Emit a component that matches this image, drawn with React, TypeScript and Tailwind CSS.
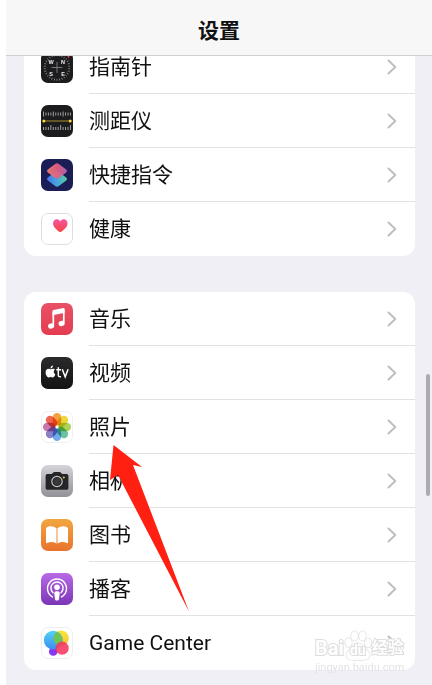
import type { ReactNode } from "react";

const COMPASS_TICKS = Array.from({ length: 30 }, (_, i) => i * 12);
const RULER_TICKS = Array.from({ length: 12 }, (_, i) => 2.5 + i * 2.45);
const PETALS = ["#f5a03a", "#ecd83a", "#aed258", "#6cc3a0", "#6fabe8", "#8a80c8", "#c777ac", "#ee6550"];

function Tile({ children, className }: { children?: ReactNode; className: string }) {
  return (
    <span className={`block size-8 shrink-0 overflow-hidden rounded-[7px] ${className}`}>
      <svg viewBox="0 0 32 32" className="size-full" aria-hidden="true">
        {children}
      </svg>
    </span>
  );
}

function CompassIcon() {
  return (
    <Tile className="bg-[#1c1c1e]">
      {COMPASS_TICKS.map((a) => (
        <path key={a} d="M16 3.2v2" stroke="#8f8f92" strokeWidth=".8" transform={`rotate(${a} 16 16.5)`} />
      ))}
      <path d="M16 11v11M10.500 16.500h11" stroke="#77777a" strokeWidth="1" />
      <path d="M25.500 3l3.500 1-1.500 3.500z" fill="#ff3b4a" />
      <g fill="#f0f0f0" fontSize="5.500" fontWeight="700" fontFamily="Liberation Sans, sans-serif" textAnchor="middle">
        <text x="10" y="12.500">W</text>
        <text x="22" y="12.500">N</text>
        <text x="10" y="24.500">S</text>
        <text x="22" y="24.500">E</text>
      </g>
    </Tile>
  );
}

function MeasureIcon() {
  return (
    <Tile className="bg-[#1c1c1e]">
      {RULER_TICKS.map((x, i) => (
        <g key={x} stroke="#b0b0b0" strokeWidth=".9">
          <path d={i % 4 === 0 ? `M${x} 6.500v5` : `M${x} 7.500v3`} />
          <path d={i % 4 === 3 ? `M${x} 25v-5` : `M${x} 25v-3`} />
        </g>
      ))}
      <path d="M3 16h26" stroke="#a98f2e" strokeWidth="1.200" />
      <circle cx="2.800" cy="16" r="1.500" fill="#ffd83a" />
      <circle cx="29.200" cy="16" r="1.500" fill="#ffd83a" />
    </Tile>
  );
}

function ShortcutsIcon() {
  return (
    <Tile className="bg-[#1b1d57]">
      <defs>
        <linearGradient id="sc-top" x1="0" y1="1" x2="1" y2="0">
          <stop offset="0" stopColor="#f0856f" />
          <stop offset=".5" stopColor="#e8607f" />
          <stop offset="1" stopColor="#b565b8" />
        </linearGradient>
        <linearGradient id="sc-low" x1="0" y1="1" x2="1" y2="0">
          <stop offset="0" stopColor="#4a6fe8" />
          <stop offset=".5" stopColor="#45a5e2" />
          <stop offset="1" stopColor="#5fcf8f" />
        </linearGradient>
      </defs>
      <rect x="8.500" y="12.500" width="15" height="15" rx="2.500" fill="url(#sc-low)" transform="translate(16 20) scale(1.040 .8) rotate(45) translate(-16 -20)" />
      <rect x="8.500" y="4.500" width="15" height="15" rx="2.500" fill="url(#sc-top)" fillOpacity=".93" transform="translate(16 12) scale(1.040 .8) rotate(45) translate(-16 -12)" />
    </Tile>
  );
}

function HealthIcon() {
  return (
    <Tile className="border border-[#dededf] bg-white">
      <defs>
        <linearGradient id="heart" x1="0" y1="0" x2="0" y2="1">
          <stop offset="0" stopColor="#f556a0" />
          <stop offset="1" stopColor="#f4453f" />
        </linearGradient>
      </defs>
      <path d="M19.500 19.500c-4-2.800-7.700-5.700-7.700-9.500 0-2.500 1.700-4.300 4-4.300 1.600 0 3 .8 3.700 2.200.7-1.400 2.100-2.200 3.700-2.200 2.300 0 4 1.800 4 4.300 0 3.800-3.700 6.700-7.700 9.500z" fill="url(#heart)" />
    </Tile>
  );
}

function MusicIcon() {
  return (
    <Tile className="bg-linear-to-b from-[#e95166] to-[#e43b50]">
      <path d="M12.300 9.300v13M22.800 6.900v12.800" stroke="#fff" strokeWidth="1.700" fill="none" />
      <path d="M11.500 8.200c0-.7.400-1.100 1-1.200l10-2c.7-.1 1.100.2 1.100.9v3.800l-12.100 2.500z" fill="#fff" />
      <ellipse cx="10.100" cy="23" rx="3.100" ry="2.600" fill="#fff" transform="rotate(-15 10.100 23)" />
      <ellipse cx="20.600" cy="20.500" rx="3.100" ry="2.600" fill="#fff" transform="rotate(-15 20.600 20.500)" />
    </Tile>
  );
}

function TvIcon() {
  return (
    <Tile className="bg-linear-to-b from-[#2b2b2d] to-[#131314]">
      <path d="M9.700 12.200c.9-.1 2.200-.9 2.900-.4.500.1 1 .4 1.300.8-1.700 1.100-1.500 3.700.4 4.600-.5 1.500-1.500 3.300-2.600 3.300-.8 0-1.100-.5-2-.5s-1.200.5-2 .5c-1.500 0-3.100-2.900-3.100-5.200 0-2.200 1.400-3.500 2.900-3.500.9 0 1.600.5 2.200.4zM9.500 11.500c-.1-1.500 1-2.800 2.400-3 .2 1.600-1 2.900-2.400 3z" fill="#fff" />
      <path d="M17.300 10.300v7.500c0 1.700.8 2.200 2.700 1.900M15.200 12.700h4.800M21.300 12.300l2.900 7.500 2.900-7.500" fill="none" stroke="#fff" strokeWidth="1.500" />
    </Tile>
  );
}

function PhotosIcon() {
  return (
    <Tile className="border border-[#f0f0f1] bg-white">
      {PETALS.map((color, i) => (
        <rect key={color} x="11.500" y="1" width="9" height="13.500" rx="4.500" fill={color} className="mix-blend-multiply" transform={`rotate(${i * 45} 16 16)`} />
      ))}
      <circle cx="16" cy="16" r="1.200" fill="#fff" fillOpacity=".8" />
    </Tile>
  );
}

function CameraIcon() {
  return (
    <Tile className="bg-linear-to-b from-[#d5d4d9] to-[#929197]">
      <path d="M6.500 9h4.300l1.500-1.500c.3-.4.700-.6 1.200-.6h5c.5 0 .9.200 1.200.6l1.500 1.500h4.300c1.100 0 1.900.8 1.900 1.900v12c0 1.100-.8 1.900-1.900 1.900h-19c-1.100 0-1.900-.8-1.900-1.900v-12c0-1.100.8-1.900 1.900-1.900z" fill="#252527" />
      <circle cx="16" cy="16.500" r="5.200" fill="none" stroke="#c4c4c8" strokeWidth="1.200" />
      <circle cx="16" cy="16.500" r="3.400" fill="#39393c" />
      <circle cx="22.800" cy="12.500" r="1" fill="#f7c52e" />
    </Tile>
  );
}

function BooksIcon() {
  return (
    <Tile className="bg-linear-to-b from-[#f1a63e] to-[#e8722f]">
      <path d="M15.500 9.300C13.800 7.800 11.500 7 9.300 7.200 7.500 7.300 5.900 8 5.400 8.700c-.3.400-.4.800-.4 1.300v13.600c0 .6.500.8 1 .5 3-1.600 6.500-1.500 9.500.3zM16.500 9.300c1.700-1.500 4-2.300 6.200-2.100 1.800.1 3.400.8 3.900 1.500.3.400.4.800.4 1.300v13.600c0 .6-.5.8-1 .5-3-1.600-6.500-1.500-9.500.3z" fill="#fff" />
    </Tile>
  );
}

function PodcastsIcon() {
  return (
    <Tile className="bg-linear-to-b from-[#b96ae6] to-[#7a35b5]">
      <g fill="none" stroke="#fff" strokeLinecap="round" strokeWidth="1.400">
        <path d="M11.500 23.900a9.500 9.500 0 1 1 9 0" />
        <path d="M12 19.700a6.100 6.100 0 1 1 8 0" />
      </g>
      <circle cx="16" cy="14.300" r="2.800" fill="#fff" />
      <path d="M13.300 20.300c0-1.600 1.200-2.100 2.700-2.100s2.700.5 2.700 2.100l-.7 5.600c-.2 1-.9 1.500-2 1.500s-1.800-.5-2-1.500z" fill="#fff" />
    </Tile>
  );
}

function GameCenterIcon() {
  return (
    <Tile className="border border-[#eeeeef] bg-white">
      <defs>
        <linearGradient id="gc-blue" x1="0" y1="0" x2="0" y2="1">
          <stop offset="0" stopColor="#53d3f7" />
          <stop offset="1" stopColor="#3b8df0" />
        </linearGradient>
        <linearGradient id="gc-yellow" x1="0" y1="0" x2="0" y2="1">
          <stop offset="0" stopColor="#fbe638" />
          <stop offset="1" stopColor="#f5c13b" />
        </linearGradient>
        <clipPath id="gc-clip">
          <circle cx="12" cy="13" r="10" />
        </clipPath>
      </defs>
      <circle cx="12" cy="25" r="4.600" fill="#8a37f0" />
      <circle cx="20.300" cy="11" r="8.300" fill="url(#gc-yellow)" />
      <circle cx="12" cy="13" r="10" fill="url(#gc-blue)" />
      <circle cx="20.300" cy="11" r="8.300" fill="#6cc35a" clipPath="url(#gc-clip)" />
      <circle cx="21.500" cy="21.500" r="7" fill="#f5375f" fillOpacity=".88" />
    </Tile>
  );
}

type Item = { label: string; icon: ReactNode };

const toolItems: Item[] = [
  { label: "指南针", icon: <CompassIcon /> },
  { label: "测距仪", icon: <MeasureIcon /> },
  { label: "快捷指令", icon: <ShortcutsIcon /> },
  { label: "健康", icon: <HealthIcon /> },
];

const mediaItems: Item[] = [
  { label: "音乐", icon: <MusicIcon /> },
  { label: "视频", icon: <TvIcon /> },
  { label: "照片", icon: <PhotosIcon /> },
  { label: "相机", icon: <CameraIcon /> },
  { label: "图书", icon: <BooksIcon /> },
  { label: "播客", icon: <PodcastsIcon /> },
  { label: "Game Center", icon: <GameCenterIcon /> },
];

function SettingsGroup({ items }: { items: Item[] }) {
  return (
    <ul className="overflow-hidden rounded-xl bg-white">
      {items.map(({ label, icon }, i) => (
        <li key={label}>
          <a href="#" className="flex h-[54px] items-center gap-4 pl-[17px]">
            {icon}
            <span className={`flex h-full flex-1 items-center justify-between pr-[18px] ${i < items.length - 1 ? "border-b border-[#e2e2e4]" : ""}`}>
              <span className="text-[21px] leading-8">{label}</span>
              <svg viewBox="0 0 10 16" className="h-4 w-[10px]" aria-hidden="true">
                <path d="M1.500 1.500L8.300 8l-6.800 6.500" fill="none" stroke="#bfbfc2" strokeWidth="2" strokeLinecap="round" strokeLinejoin="round" />
              </svg>
            </span>
          </a>
        </li>
      ))}
    </ul>
  );
}

function Pointer() {
  return (
    <svg viewBox="0 0 80 167" className="pointer-events-none absolute top-[445px] left-[109px] h-[167px] w-20" aria-hidden="true">
      <path d="M4.500 0L33 22l-9-2 56 146.500L9 30l-8 5z" fill="#ff2012" />
    </svg>
  );
}

function Watermark() {
  return (
    <div className="pointer-events-none absolute top-[630px] left-[315px]">
      <div className="flex h-8 items-end font-bold text-white [-webkit-text-stroke:2px_#dddddf] [paint-order:stroke]">
        <span className="text-xl leading-7">Bai</span>
        <span className="relative flex h-8 w-7 items-end justify-center">
          <svg viewBox="0 0 28 32" className="absolute inset-0 size-full" fill="#fff" fillOpacity=".7" stroke="#dfdfe1" strokeWidth="1.200" aria-hidden="true">
            <ellipse cx="4.500" cy="12.500" rx="3.500" ry="4.700" />
            <ellipse cx="10.500" cy="6" rx="3.500" ry="4.900" />
            <ellipse cx="18.500" cy="6" rx="3.500" ry="4.900" />
            <ellipse cx="24" cy="13" rx="3.500" ry="4.700" />
            <path d="M14 13c4 0 5.500 4 8.500 6.500s4.500 5 2.500 8.500c-2 3-6 2-11 2s-9 1-11-2c-2-3.500-.5-6 2.500-8.500S10 13 14 13z" />
          </svg>
          <span className="relative text-sm leading-6">du</span>
        </span>
        <span className="text-base leading-7">经验</span>
      </div>
      <div className="text-[11px] leading-3 text-[#e3e3e6]">jingyan.baidu.com</div>
    </div>
  );
}

export default function App() {
  return (
    <div className="relative min-h-screen overflow-hidden border-l-[6px] border-white bg-[#f0eff5] font-[Roboto,'Noto_Sans_CJK_SC',sans-serif] text-[#111113]">
      <header className="relative z-10 flex h-14 items-end justify-center border-b border-[#cfcfd2] bg-[#f7f7f7] pb-2">
        <h1 className="text-[21px] leading-8 font-bold">设置</h1>
      </header>
      <main className="-mt-4 flex flex-col gap-9 pr-[17px] pb-4 pl-[18px]">
        <SettingsGroup items={toolItems} />
        <SettingsGroup items={mediaItems} />
      </main>
      <div className="absolute top-[374px] right-[2px] h-[122px] w-1 rounded-full bg-[#acabb1]" />
      <div className="absolute inset-y-0 -left-[6px]">
        <Pointer />
        <Watermark />
      </div>
    </div>
  );
}
